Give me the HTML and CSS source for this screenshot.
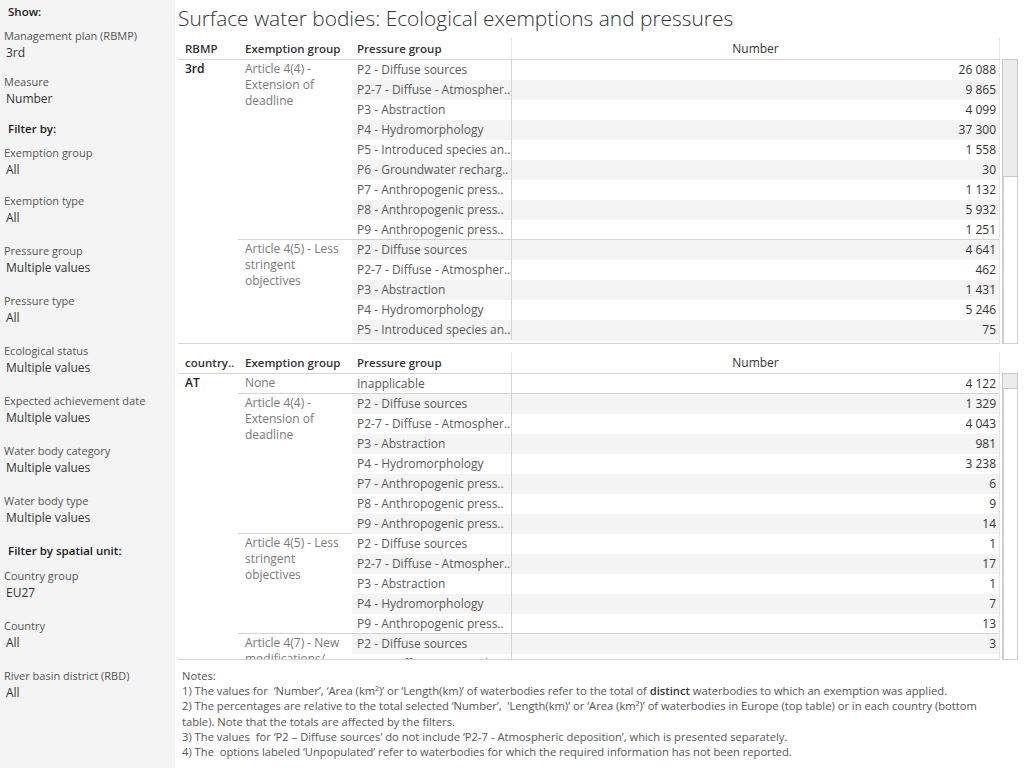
FILE: index.html
```html
<!DOCTYPE html>
<html lang="en">
<head>
<meta charset="utf-8">
<title>Surface water bodies: Ecological exemptions and pressures</title>
<link rel="stylesheet" href="styles.css">
</head>
<body>
<div class="page">
  <aside class="side">
    <section class="sec sec-show">
      <div class="sec-title">Show:</div>
      <div class="flt"><div class="flt-label">Management plan (RBMP)</div><div class="flt-value">3rd</div></div>
      <div class="flt"><div class="flt-label">Measure</div><div class="flt-value">Number</div></div>
    </section>
    <section class="sec sec-filter">
      <div class="sec-title">Filter by:</div>
      <div class="flt"><div class="flt-label">Exemption group</div><div class="flt-value">All</div></div>
      <div class="flt"><div class="flt-label">Exemption type</div><div class="flt-value">All</div></div>
      <div class="flt"><div class="flt-label">Pressure group</div><div class="flt-value">Multiple values</div></div>
      <div class="flt"><div class="flt-label">Pressure type</div><div class="flt-value">All</div></div>
      <div class="flt"><div class="flt-label">Ecological status</div><div class="flt-value">Multiple values</div></div>
      <div class="flt"><div class="flt-label">Expected achievement date</div><div class="flt-value">Multiple values</div></div>
      <div class="flt"><div class="flt-label">Water body category</div><div class="flt-value">Multiple values</div></div>
      <div class="flt"><div class="flt-label">Water body type</div><div class="flt-value">Multiple values</div></div>
    </section>
    <section class="sec sec-spatial">
      <div class="sec-title">Filter by spatial unit:</div>
      <div class="flt"><div class="flt-label">Country group</div><div class="flt-value">EU27</div></div>
      <div class="flt"><div class="flt-label">Country</div><div class="flt-value">All</div></div>
      <div class="flt"><div class="flt-label">River basin district (RBD)</div><div class="flt-value">All</div></div>
    </section>
  </aside>

  <main class="main">
    <h1 class="title">Surface water bodies: Ecological exemptions and pressures</h1>

    <!-- Europe-wide totals -->
    <div class="xtab xtab-top">
      <div class="xtab-head">
        <div class="hc c1">RBMP</div>
        <div class="hc c2">Exemption group</div>
        <div class="hc c3">Pressure group</div>
        <div class="hc c4">Number</div>
      </div>
      <div class="xtab-frame">
        <div class="xtab-body">
          <div class="dim">3rd</div>
          <div class="groups">
            <div class="grp">
              <div class="ex">Article 4(4) - Extension of deadline</div>
              <div class="rows">
                <div class="row"><div class="pr">P2 - Diffuse sources</div><div class="num">26 088</div></div>
                <div class="row alt"><div class="pr">P2-7 - Diffuse - Atmospher..</div><div class="num">9 865</div></div>
                <div class="row"><div class="pr">P3 - Abstraction</div><div class="num">4 099</div></div>
                <div class="row alt"><div class="pr">P4 - Hydromorphology</div><div class="num">37 300</div></div>
                <div class="row"><div class="pr">P5 - Introduced species an..</div><div class="num">1 558</div></div>
                <div class="row alt"><div class="pr">P6 - Groundwater recharg..</div><div class="num">30</div></div>
                <div class="row"><div class="pr">P7 - Anthropogenic press..</div><div class="num">1 132</div></div>
                <div class="row alt"><div class="pr">P8 - Anthropogenic press..</div><div class="num">5 932</div></div>
                <div class="row"><div class="pr">P9 - Anthropogenic press..</div><div class="num">1 251</div></div>
              </div>
            </div>
            <div class="grp">
              <div class="ex">Article 4(5) - Less stringent objectives</div>
              <div class="rows">
                <div class="row alt"><div class="pr">P2 - Diffuse sources</div><div class="num">4 641</div></div>
                <div class="row"><div class="pr">P2-7 - Diffuse - Atmospher..</div><div class="num">462</div></div>
                <div class="row alt"><div class="pr">P3 - Abstraction</div><div class="num">1 431</div></div>
                <div class="row"><div class="pr">P4 - Hydromorphology</div><div class="num">5 246</div></div>
                <div class="row alt"><div class="pr">P5 - Introduced species an..</div><div class="num">75</div></div>
              </div>
            </div>
          </div>
        </div>
        <div class="scroll"><div class="thumb thumb-top"></div></div>
      </div>
    </div>

    <!-- Per-country breakdown -->
    <div class="xtab xtab-bottom">
      <div class="xtab-head">
        <div class="hc c1">country..</div>
        <div class="hc c2">Exemption group</div>
        <div class="hc c3">Pressure group</div>
        <div class="hc c4">Number</div>
      </div>
      <div class="xtab-frame">
        <div class="xtab-body">
          <div class="dim">AT</div>
          <div class="groups">
            <div class="grp">
              <div class="ex">None</div>
              <div class="rows">
                <div class="row"><div class="pr">Inapplicable</div><div class="num">4 122</div></div>
              </div>
            </div>
            <div class="grp">
              <div class="ex">Article 4(4) - Extension of deadline</div>
              <div class="rows">
                <div class="row alt"><div class="pr">P2 - Diffuse sources</div><div class="num">1 329</div></div>
                <div class="row"><div class="pr">P2-7 - Diffuse - Atmospher..</div><div class="num">4 043</div></div>
                <div class="row alt"><div class="pr">P3 - Abstraction</div><div class="num">981</div></div>
                <div class="row"><div class="pr">P4 - Hydromorphology</div><div class="num">3 238</div></div>
                <div class="row alt"><div class="pr">P7 - Anthropogenic press..</div><div class="num">6</div></div>
                <div class="row"><div class="pr">P8 - Anthropogenic press..</div><div class="num">9</div></div>
                <div class="row alt"><div class="pr">P9 - Anthropogenic press..</div><div class="num">14</div></div>
              </div>
            </div>
            <div class="grp">
              <div class="ex">Article 4(5) - Less stringent objectives</div>
              <div class="rows">
                <div class="row"><div class="pr">P2 - Diffuse sources</div><div class="num">1</div></div>
                <div class="row alt"><div class="pr">P2-7 - Diffuse - Atmospher..</div><div class="num">17</div></div>
                <div class="row"><div class="pr">P3 - Abstraction</div><div class="num">1</div></div>
                <div class="row alt"><div class="pr">P4 - Hydromorphology</div><div class="num">7</div></div>
                <div class="row"><div class="pr">P9 - Anthropogenic press..</div><div class="num">13</div></div>
              </div>
            </div>
            <div class="grp">
              <div class="ex">Article 4(7) - New modifications/ sustainable development</div>
              <div class="rows">
                <div class="row alt"><div class="pr">P2 - Diffuse sources</div><div class="num">3</div></div>
                <div class="row"><div class="pr">P2-7 - Diffuse - Atmospher..</div><div class="num">22</div></div>
                <div class="row alt"><div class="pr">P4 - Hydromorphology</div><div class="num">5</div></div>
              </div>
            </div>
          </div>
        </div>
        <div class="scroll"><div class="thumb thumb-bottom"></div></div>
      </div>
    </div>

    <div class="notes">
      <p>Notes:</p>
      <p>1) The values for &nbsp;‘Number’, ‘Area (km²)’ or ‘Length(km)’ of waterbodies refer to the total of <b>distinct</b> waterbodies to which an exemption was applied.</p>
      <p>2) The percentages are relative to the total selected ‘Number’, &nbsp;‘Length(km)’ or ‘Area (km²)’ of waterbodies in Europe (top table) or in each country (bottom<br>table). Note that the totals are affected by the filters.</p>
      <p>3) The values &nbsp;for ‘P2 – Diffuse sources’ do not include ‘P2-7 - Atmospheric deposition’, which is presented separately.</p>
      <p>4) The &nbsp;options labeled ‘Unpopulated’ refer to waterbodies for which the required information has not been reported.</p>
    </div>
  </main>
</div>
</body>
</html>
```

FILE: styles.css
```css
* { box-sizing: border-box; }

html, body {
  margin: 0;
  padding: 0;
  background: #ffffff;
}

body {
  font-family: "Open Sans", "Noto Sans", "Liberation Sans", sans-serif;
  color: #333333;
}

.page {
  display: flex;
  width: 1024px;
  height: 768px;
  overflow: hidden;
}

/* ---------- filter sidebar ---------- */
.side {
  width: 175px;
  flex: none;
  background: #f4f4f4;
  padding-top: 4px;
}

.sec-title {
  font-size: 11.5px;
  line-height: 16px;
  font-weight: 600;
  color: #1a1a1a;
  padding-left: 8px;
}

.sec-show .sec-title + .flt { margin-top: 7px; }
.sec-show .flt + .flt { margin-top: 12px; }

.sec-filter { margin-top: 14px; }
.sec-filter .sec-title + .flt { margin-top: 7px; }
.sec-filter .flt + .flt { margin-top: 16px; }
.sec-filter .sec-title + .flt + .flt { margin-top: 14px; }

.sec-spatial { margin-top: 17px; }
.sec-spatial .sec-title + .flt { margin-top: 8px; }
.sec-spatial .flt + .flt { margin-top: 16px; }

.flt-label {
  font-size: 11px;
  line-height: 17px;
  color: #555555;
  padding-left: 4px;
  white-space: nowrap;
}

.flt-value {
  font-size: 12px;
  line-height: 17px;
  color: #333333;
  padding-left: 6px;
}

/* ---------- main view ---------- */
.main {
  flex: 1;
  padding-left: 3px;
}

.title {
  margin: 0;
  padding-top: 5px;
  margin-bottom: 7px;
  font-size: 20.9px;
  line-height: 26px;
  font-weight: 300;
  color: #333333;
  white-space: nowrap;
}

.xtab-bottom { margin-top: 8px; }

.xtab-head {
  display: grid;
  grid-template-columns: 60px 114px 159px 489px;
  width: 822px;
  height: 22px;
  border-bottom: 1px solid #d4d4d4;
}

.hc {
  font-size: 11.5px;
  line-height: 21px;
  font-weight: 600;
  color: #333333;
  padding-left: 7px;
  white-space: nowrap;
}

.hc.c3 { padding-left: 5px; }

.hc.c4 {
  text-align: center;
  font-weight: 400;
  font-size: 12px;
  padding-left: 0;
  border-left: 1px solid #e6e6e6;
  border-right: 1px solid #e6e6e6;
}

.xtab-frame {
  display: flex;
  gap: 2px;
}

.xtab-body {
  display: flex;
  width: 822px;
  overflow: hidden;
  border-bottom: 1px solid #d4d4d4;
}

.xtab-top .xtab-body { height: 284px; }
.xtab-bottom .xtab-body { height: 286px; }

.dim {
  width: 60px;
  flex: none;
  font-size: 12px;
  line-height: 16px;
  padding: 1px 0 0 7px;
  font-weight: 600;
  color: #222222;
}

.groups {
  width: 762px;
  flex: none;
  border-right: 1px solid #e6e6e6;
}

.grp {
  display: flex;
  border-top: 1px solid #d4d4d4;
  margin-top: -1px;
}

.grp:first-child {
  border-top: none;
  margin-top: 0;
}

.ex {
  width: 114px;
  flex: none;
  font-size: 12px;
  line-height: 16px;
  padding: 1px 2px 0 7px;
  color: #7a7a7a;
}

.rows { flex: 1; }

.row {
  display: flex;
  height: 20px;
  font-size: 12px;
  line-height: 20px;
}

.row.alt { background: #f4f4f4; }

.pr {
  width: 159px;
  flex: none;
  padding-left: 5px;
  color: #5a5a5a;
  white-space: nowrap;
  overflow: hidden;
}

.num {
  flex: 1;
  text-align: right;
  padding-right: 3px;
  color: #333333;
  border-left: 1px solid #d4d4d4;
}

/* ---------- scrollbars ---------- */
.scroll {
  width: 16px;
  flex: none;
  margin-top: -1px;
  border: 1px solid #d0d0d0;
  border-left-width: 2px;
  background: #ffffff;
}

.thumb {
  background: #ececec;
  border: 1px solid #c8c8c8;
  margin: -1px -1px 0 -2px;
}

.thumb-top { height: 118px; }
.thumb-bottom { height: 16px; }

/* ---------- notes ---------- */
.notes {
  margin-top: 8px;
  padding-left: 4px;
  font-size: 11.2px;
  line-height: 15.2px;
  color: #555555;
}

.notes p {
  margin: 0;
  white-space: nowrap;
}

.notes b {
  font-weight: 600;
  color: #333333;
}
```
